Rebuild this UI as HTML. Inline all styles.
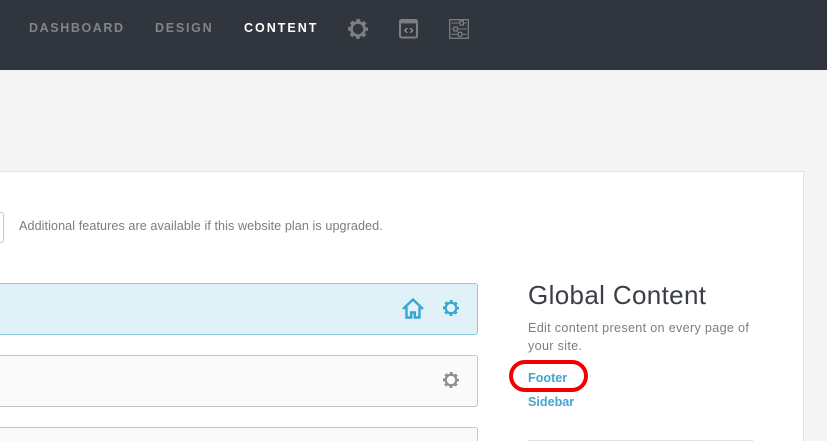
<!DOCTYPE html>
<html>
<head>
<meta charset="utf-8">
<style>
html,body{margin:0;padding:0;width:827px;height:441px;overflow:hidden}
body{background:#f4f4f4;font-family:"Liberation Sans",sans-serif}
#w{position:relative;width:827px;height:441px;overflow:hidden;background:#f4f4f4}
.a{position:absolute;white-space:nowrap}
.nav{left:0;top:0;width:827px;height:70px;background:#31353d}
.n{top:20px;font-size:12.5px;line-height:16px;font-weight:700;letter-spacing:1.6px;color:#80848b}
.card{left:0;top:171px;width:804px;height:270px;background:#fff;border-top:1px solid #e2e2e2;border-right:1px solid #e2e2e2;box-sizing:border-box}
.row{left:0;width:478px;height:52px;box-sizing:border-box;border:1px solid #c4c4c4;border-left:none;border-radius:0 3px 3px 0;background:#fafafa}
svg{position:absolute}
</style>
</head>
<body>
<div id="w">
<div class="a nav"></div>
<div class="a n" style="left:29px">DASHBOARD</div>
<div class="a n" style="left:155px;letter-spacing:1.75px">DESIGN</div>
<div class="a n" style="left:244px;color:#fff;letter-spacing:2px">CONTENT</div>

<svg style="left:348px;top:19px" width="20" height="20" viewBox="0 0 20 20">
<circle cx="10" cy="10" r="6.6" fill="none" stroke="#7a7e85" stroke-width="2.8"/>
<circle cx="10" cy="10" r="8.5" fill="none" stroke="#7a7e85" stroke-width="3" stroke-dasharray="3.6 3.08" stroke-dashoffset="1.8"/>
</svg>

<svg style="left:399px;top:19px" width="20" height="20" viewBox="0 0 20 20">
<rect x="1" y="1" width="17" height="17.5" rx="1.5" fill="none" stroke="#7a7e85" stroke-width="2"/>
<rect x="1" y="1" width="17" height="3.4" fill="#7a7e85"/>
<path d="M8.3 9.2L5.8 11.5L8.3 13.8M11.2 9.2L13.7 11.5L11.2 13.8" fill="none" stroke="#a0a3a8" stroke-width="1.1"/>
</svg>

<svg style="left:449px;top:19px" width="21" height="20" viewBox="0 0 21 20">
<rect x="0.7" y="0.7" width="18.6" height="18.6" fill="none" stroke="#7a7e85" stroke-width="1.3"/>
<path d="M2.5 4H11M14.5 4H17.5M2.5 10H5M8.5 10H17.5M2.5 15.3H9.3M12.8 15.3H17.5" stroke="#7a7e85" stroke-width="1.1"/>
<rect x="11" y="2" width="3.4" height="4" fill="none" stroke="#7a7e85" stroke-width="1.2"/>
<rect x="5" y="8" width="3.4" height="4" fill="none" stroke="#7a7e85" stroke-width="1.2"/>
<rect x="9.3" y="13.3" width="3.4" height="4" fill="none" stroke="#7a7e85" stroke-width="1.2"/>
</svg>

<div class="a card"></div>
<div class="a" style="left:0;top:212px;width:4px;height:31px;box-sizing:border-box;border:1px solid #c8c8c8;border-left:none;border-radius:0 3px 3px 0;background:#fff"></div>
<div class="a" style="left:19px;top:218px;font-size:12.6px;line-height:17px;color:#797d85;letter-spacing:0.08px">Additional features are available if this website plan is upgraded.</div>

<div class="a row" style="top:283px;background:#e1f1f8;border-color:#8ccde4"></div>
<div class="a row" style="top:355px"></div>
<div class="a row" style="top:427px;height:14px;border-bottom:none;border-radius:0 3px 0 0"></div>

<svg style="left:402px;top:298px" width="22" height="21" viewBox="0 0 22 21">
<path d="M1 11L11 1.5L21 11" fill="none" stroke="#39a6d1" stroke-width="2.4"/>
<path d="M4.5 9V19.5H9.2V14.5H12.8V19.5H17.5V9" fill="none" stroke="#39a6d1" stroke-width="2.4"/>
</svg>

<svg style="left:443px;top:300px" width="16" height="16" viewBox="0 0 20 20">
<circle cx="10" cy="10" r="6.6" fill="none" stroke="#39a6d1" stroke-width="2.8"/>
<circle cx="10" cy="10" r="8.5" fill="none" stroke="#39a6d1" stroke-width="3" stroke-dasharray="3.6 3.08" stroke-dashoffset="1.8"/>
</svg>

<svg style="left:443px;top:372px" width="16" height="16" viewBox="0 0 20 20">
<circle cx="10" cy="10" r="6.6" fill="none" stroke="#8b8e93" stroke-width="2.8"/>
<circle cx="10" cy="10" r="8.5" fill="none" stroke="#8b8e93" stroke-width="3" stroke-dasharray="3.6 3.08" stroke-dashoffset="1.8"/>
</svg>

<div class="a" style="left:528px;top:279px;font-size:26px;line-height:32px;color:#3a3e45;letter-spacing:0.35px">Global Content</div>
<div class="a" style="left:528px;top:319px;font-size:12.6px;line-height:18px;color:#797d85;letter-spacing:0.32px">Edit content present on every page of<br>your site.</div>
<div class="a" style="left:528px;top:370px;font-size:12.6px;line-height:17px;font-weight:700;color:#44a5cf">Footer</div>
<div class="a" style="left:528px;top:394px;font-size:12.6px;line-height:17px;font-weight:700;color:#44a5cf">Sidebar</div>
<div class="a" style="left:528px;top:440px;width:225px;height:1px;background:#dfdfdf"></div>

<div class="a" style="left:509px;top:360px;width:79px;height:32px;box-sizing:border-box;border:4px solid #f00000;border-radius:16px"></div>
</div>
</body>
</html>
